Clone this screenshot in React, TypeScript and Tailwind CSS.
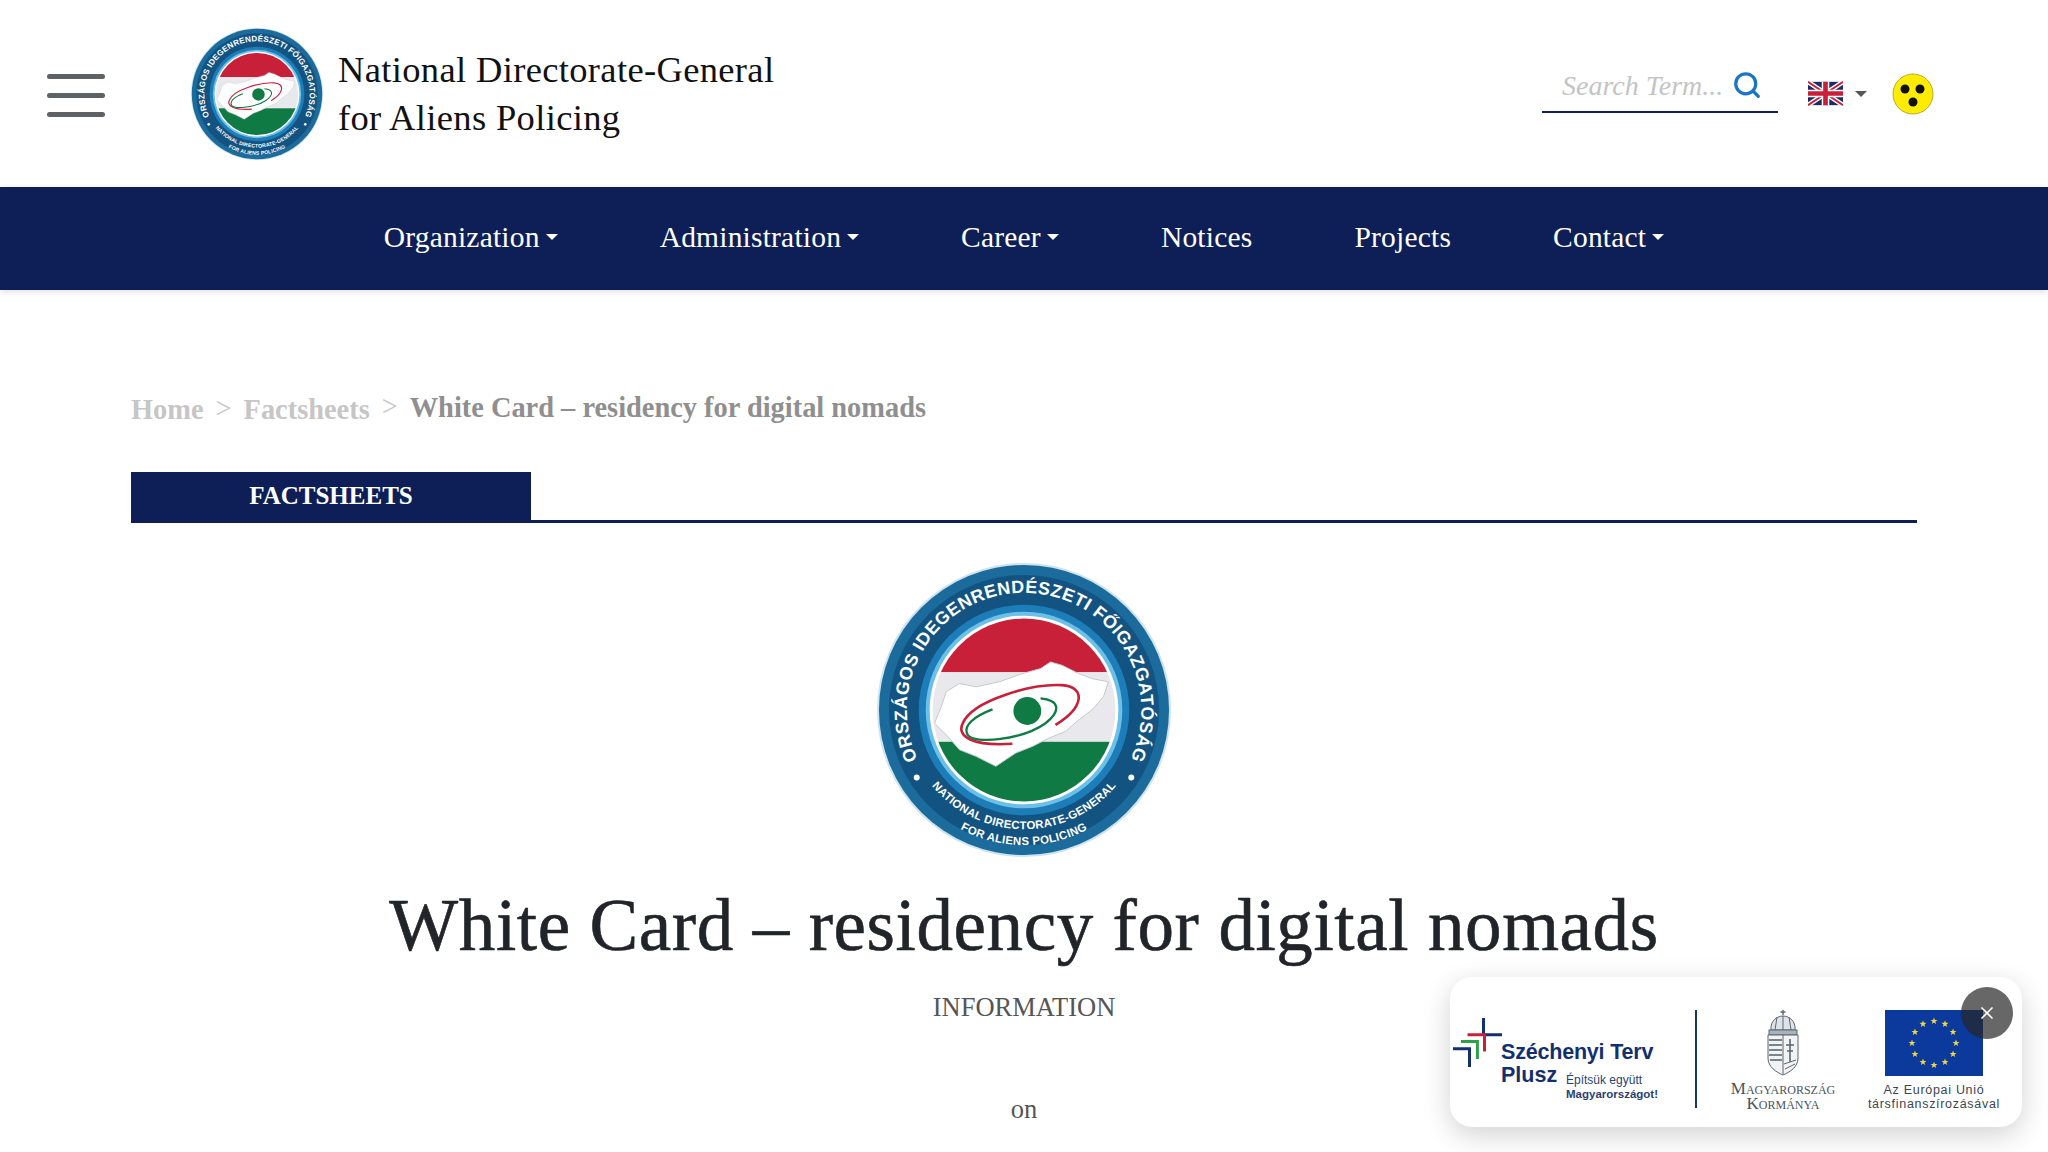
import React from 'react';
import { Search, X } from 'lucide-react';

const serif = { fontFamily: '"Liberation Serif", serif' };

const navItems = [
  { label: 'Organization', caret: true },
  { label: 'Administration', caret: true },
  { label: 'Career', caret: true },
  { label: 'Notices', caret: false },
  { label: 'Projects', caret: false },
  { label: 'Contact', caret: true },
];

const Caret = ({ className }: { className: string }) => (
  <span className={`inline-block border-x-[6px] border-t-[6px] border-x-transparent ${className}`} />
);

// round seal, drawn in the coordinates of the big copy
const Seal = ({ id, size }: { id: string; size: number }) => (
  <svg width={size} height={size} viewBox="-150 -150 300 300" className="shrink-0">
    <defs>
      <clipPath id={`${id}-disc`}>
        <circle r="92" />
      </clipPath>
      <path id={`${id}-top`} d="M 0 118 A 118 118 0 1 1 0.01 118" />
      <path id={`${id}-bot1`} d="M 0 -120 A 120 120 0 1 0 0.01 -120" />
      <path id={`${id}-bot2`} d="M 0 -136 A 136 136 0 1 0 0.01 -136" />
    </defs>
    <circle r="148" fill="#cfe3ee" />
    <circle r="146" fill="#1b6c9c" />
    <circle r="136" fill="#125382" />
    <circle r="106" fill="#1d7db8" />
    <circle r="99" fill="#6cc0e8" />
    <circle r="95" fill="#ffffff" />
    <g clipPath={`url(#${id}-disc)`}>
      <rect x="-100" y="-100" width="200" height="62" fill="#c9203a" />
      <rect x="-100" y="-38" width="200" height="70" fill="#e9e9ed" />
      <rect x="-100" y="32" width="200" height="70" fill="#0f7a43" />
      <g transform="scale(0.3333) translate(-495 -480)">
        <path
          d="M225 520 L245 470 L260 425 L300 400 L350 410 L420 395 L490 370 L545 355 L575 335 L610 345 L660 370 L700 385 L750 395 L735 440 L700 480 L660 510 L620 545 L570 565 L520 590 L470 610 L410 650 L350 620 L300 600 L265 560 Z"
          fill="#ffffff"
          stroke="#c8c8cc"
          strokeWidth="3"
        />
        <path d="M460 582 C340 590 290 560 310 520 C340 450 520 400 610 405 C680 410 680 470 590 525" fill="none" stroke="#c9203a" strokeWidth="8" />
        <path d="M400 478 C340 500 310 530 325 555 C345 585 490 570 560 520 C610 480 600 450 545 445" fill="none" stroke="#0f7a43" strokeWidth="7" />
        <circle cx="505" cy="483" r="42" fill="#0f7a43" />
      </g>
    </g>
    <text fill="#ffffff" fontSize="18" fontWeight="700" letterSpacing="0.5" style={{ fontFamily: '"Liberation Sans", sans-serif' }}>
      <textPath href={`#${id}-top`} startOffset="50%" textAnchor="middle">
        ORSZÁGOS IDEGENRENDÉSZETI FŐIGAZGATÓSÁG
      </textPath>
    </text>
    <text fill="#ffffff" fontSize="11.5" fontWeight="700" letterSpacing="0.3" style={{ fontFamily: '"Liberation Sans", sans-serif' }}>
      <textPath href={`#${id}-bot1`} startOffset="50%" textAnchor="middle">
        NATIONAL DIRECTORATE-GENERAL
      </textPath>
    </text>
    <text fill="#ffffff" fontSize="11.5" fontWeight="700" letterSpacing="0.3" style={{ fontFamily: '"Liberation Sans", sans-serif' }}>
      <textPath href={`#${id}-bot2`} startOffset="50%" textAnchor="middle">
        FOR ALIENS POLICING
      </textPath>
    </text>
    <circle cx="-108" cy="68" r="3" fill="#ffffff" />
    <circle cx="108" cy="68" r="3" fill="#ffffff" />
  </svg>
);

const UkFlag = () => (
  <svg width="35" height="25" viewBox="0 0 60 40">
    <rect width="60" height="40" fill="#1f2a63" />
    <path d="M0 0 L60 40 M60 0 L0 40" stroke="#ffffff" strokeWidth="8" />
    <path d="M0 0 L60 40 M60 0 L0 40" stroke="#c8203a" strokeWidth="3" />
    <path d="M30 0 V40 M0 20 H60" stroke="#ffffff" strokeWidth="13" />
    <path d="M30 0 V40 M0 20 H60" stroke="#c8203a" strokeWidth="8" />
  </svg>
);

const BlindIcon = () => (
  <svg width="42" height="42" viewBox="0 0 42 42">
    <circle cx="21" cy="21" r="20" fill="#ffec00" stroke="#b8ab30" strokeWidth="1" />
    <circle cx="13" cy="16" r="4.5" fill="#111111" />
    <circle cx="28" cy="16" r="4.5" fill="#111111" />
    <circle cx="21" cy="29" r="4.5" fill="#111111" />
  </svg>
);

const PlanLogo = () => (
  <svg width="49" height="49" viewBox="0 0 49 49" fill="none" strokeWidth="3" className="shrink-0">
    <path d="M30.5 0 V18 M30 16.7 H49" stroke="#12306f" />
    <path d="M14.5 16.7 H31.5 V33.4" stroke="#c9203a" />
    <path d="M8 23.4 H24.4 V41" stroke="#2ba14b" />
    <path d="M0 30.7 H16.5 V49" stroke="#12306f" />
  </svg>
);

const CoatOfArms = () => (
  <svg width="34" height="66" viewBox="0 0 34 66" fill="none" stroke="#5c6670" strokeWidth="1">
    <path d="M17 0 V5 M14.5 2 H19.5" strokeWidth="1.4" />
    <path d="M5 20 C4 11 11 6 17 6 C23 6 30 11 29 20 Z" fill="#dfe3e7" />
    <path d="M11 7 L9 20 M17 6 V20 M23 7 L25 20" />
    <rect x="3" y="20" width="28" height="5" fill="#aab2ba" />
    <path d="M2 25 H32 V48 C32 57 24 62 17 65 C10 62 2 57 2 48 Z" fill="#f1f3f5" />
    <path d="M17 25 V64" />
    <path d="M3 30 H16 M3 35 H16 M3 40 H16 M3 45 H16 M4 50 H16" stroke="#7b848d" strokeWidth="2.2" />
    <path d="M24 29 V52 M20 35 H28 M21 41 H27" strokeWidth="1.6" />
    <path d="M18 54 L30 50 M19 59 L29 54" />
  </svg>
);

const euStars = Array.from({ length: 12 }, (_, i) => {
  const a = (i * Math.PI) / 6;
  return { x: 49 + 22 * Math.sin(a), y: 33 - 22 * Math.cos(a) };
});

const EuFlag = () => (
  <svg width="98" height="66" viewBox="0 0 98 66">
    <rect width="98" height="66" fill="#0b3a9c" />
    {euStars.map((s, i) => (
      <polygon
        key={i}
        transform={`translate(${s.x} ${s.y})`}
        points="0,-3.6 0.9,-1.1 3.5,-1.1 1.4,0.5 2.2,3 0,1.5 -2.2,3 -1.4,0.5 -3.5,-1.1 -0.9,-1.1"
        fill="#f0d848"
      />
    ))}
  </svg>
);

const FundingCard = () => (
  <div
    className="absolute left-[1450px] top-[977px] w-[572px] h-[150px] bg-white rounded-[22px] shadow-[0_8px_28px_rgba(0,0,0,0.18)] flex items-start text-[#12306f]"
    style={{ fontFamily: '"Liberation Sans", sans-serif' }}
  >
    <div className="w-[245px] pl-[3px] pt-[41px] flex items-start">
      <PlanLogo />
      <div className="w-[190px] -ml-[1px] pt-[23px]">
        <div className="text-[21.5px] leading-[23px] font-bold whitespace-nowrap tracking-[-0.2px]">Széchenyi Terv</div>
        <div className="flex items-start">
          <div className="text-[21.5px] leading-[23px] font-bold w-[65px]">Plusz</div>
          <div className="text-[11.5px] leading-[14px] text-[#2b3f70] pt-[9px] whitespace-nowrap">
            <span className="text-[12px]">Építsük együtt</span>
            <br />
            <span className="font-semibold">Magyarországot!</span>
          </div>
        </div>
      </div>
    </div>
    <div className="w-[2px] h-[98px] mt-[33px] bg-[#1c3566]" />
    <div className="w-[172px] pt-[33px] flex flex-col items-center">
      <CoatOfArms />
      <div
        className="mt-[5px] text-[17px] leading-[15px] text-[#4a5560] text-center whitespace-nowrap"
        style={{ ...serif, fontVariant: 'small-caps' }}
      >
        Magyarország
        <br />
        Kormánya
      </div>
    </div>
    <div className="w-[144px] pt-[33px] flex flex-col items-center -ml-[7px]">
      <EuFlag />
      <div className="mt-[7px] text-[12.5px] leading-[14px] text-[#3c4650] text-center whitespace-nowrap tracking-[0.7px]">
        Az Európai Unió
        <br />
        társfinanszírozásával
      </div>
    </div>
    <button className="absolute right-[9px] top-[10px] w-[52px] h-[52px] rounded-full bg-[#262626]/70 flex items-center justify-center text-white">
      <X size={20} strokeWidth={2} />
    </button>
  </div>
);

export default function App() {
  return (
    <div className="relative h-screen overflow-hidden bg-white text-[#212529]" style={serif}>
      <header className="h-[187px] flex items-center">
        <div className="ml-[47px] mt-[4px] w-[58px] flex flex-col gap-[14px]">
          <span className="h-[5px] rounded-full bg-[#5f6265]" />
          <span className="h-[5px] rounded-full bg-[#5f6265]" />
          <span className="h-[5px] rounded-full bg-[#5f6265]" />
        </div>
        <div className="ml-[85px] flex items-center gap-[14px]">
          <Seal id="small" size={134} />
          <div className="text-[36.5px] leading-[48px] text-[#111] tracking-[0.35px]">
            National Directorate-General
            <br />
            for Aliens Policing
          </div>
        </div>
        <div className="ml-auto mr-[114px] flex items-center">
          <div className="w-[236px] h-[46px] -mt-[7px] border-b-2 border-[#0e1f57] pl-[20px] flex items-center gap-[6px]">
            <span className="italic text-[28px] leading-none text-[#c4c4c4] w-[165px] whitespace-nowrap -mt-[6px]">Search Term...</span>
            <Search size={30} strokeWidth={2.6} className="text-[#1b74c4] -mt-[9px] -ml-[1px]" />
          </div>
          <div className="ml-[30px] flex items-center gap-[12px]">
            <UkFlag />
            <Caret className="border-t-[#555]" />
          </div>
          <div className="ml-[25px]">
            <BlindIcon />
          </div>
        </div>
      </header>

      <nav className="h-[103px] bg-[#0e1f57] shadow-[0_2px_6px_rgba(0,0,0,0.12)] flex items-center justify-center gap-[102px] text-white text-[29.5px] tracking-[0.2px]">
        {navItems.map((item) => (
          <a key={item.label} className="flex items-center gap-[6px] -mt-[3px]">
            {item.label}
            {item.caret && <Caret className="border-t-white" />}
          </a>
        ))}
      </nav>

      <main className="px-[131px]">
        <div className="pt-[98px] flex items-center text-[28.4px] leading-[36px] font-bold whitespace-nowrap">
          <span className="text-[#c6c6c6] mt-[4px]">Home</span>
          <span className="text-[#c6c6c6] font-normal mx-[12px] mt-[2px]">&gt;</span>
          <span className="text-[#c6c6c6] mt-[4px]">Factsheets</span>
          <span className="text-[#c6c6c6] font-normal mx-[12px] -mt-[2px]">&gt;</span>
          <span className="text-[#8f8f8f] -mt-[1px]">White Card – residency for digital nomads</span>
        </div>

        <div className="mt-[44px] border-b-[3px] border-[#0e1f57]">
          <div className="w-[400px] h-[48px] bg-[#0e1f57] text-white text-[25px] font-bold flex items-center justify-center">
            FACTSHEETS
          </div>
        </div>

        <div className="mt-[38px] flex justify-center">
          <Seal id="big" size={298} />
        </div>

        <h1 className="mt-[25px] text-center text-[73px] leading-[84px] tracking-[0.6px] font-normal [-webkit-text-stroke:0.6px_#212529]">
          White Card – residency for digital nomads
        </h1>
        <p className="mt-[21px] text-center text-[26.5px] leading-[36px] text-[#555]">INFORMATION</p>
        <p className="mt-[66px] text-center text-[26.5px] leading-[36px] text-[#555]">on</p>
      </main>

      <FundingCard />
    </div>
  );
}
